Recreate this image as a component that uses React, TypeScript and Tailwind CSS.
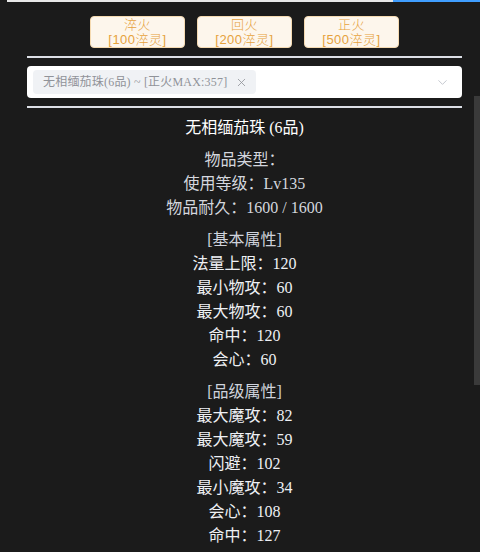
import { ChevronDown, X } from "lucide-react";

const serif = "font-['Liberation_Serif','Noto_Sans_CJK_SC',serif]";

const buttons = [
  { name: "淬火", cost: "[100淬灵]" },
  { name: "回火", cost: "[200淬灵]" },
  { name: "正火", cost: "[500淬灵]" },
];

const groups: { head?: string; rows: string[] }[] = [
  { rows: ["物品类型：", "使用等级：Lv135", "物品耐久：1600 / 1600"] },
  { head: "[基本属性]", rows: ["法量上限：120", "最小物攻：60", "最大物攻：60", "命中：120", "会心：60"] },
  { head: "[品级属性]", rows: ["最大魔攻：82", "最大魔攻：59", "闪避：102", "最小魔攻：34", "会心：108", "命中：127"] },
];

export default function App() {
  return (
    <div className="relative w-[480px] h-[552px] overflow-hidden bg-[#1b1b1b]">
      {/* top strip */}
      <div className="flex h-[2px]">
        <div className="w-[7px]" />
        <div className="w-[386px] bg-[#e8e8e8]" />
        <div className="flex-1 bg-[#409eff]" />
      </div>

      <div className="pl-[27px] pr-[18px]">
        {/* action buttons */}
        <div className="mt-[14px] flex justify-center gap-3">
          {buttons.map((b) => (
            <button
              key={b.name}
              className="w-[95px] h-[32px] flex flex-col items-center justify-center rounded-[4px] border border-[#f5dab1] bg-[#fdf6ec] text-[#e6a23c] text-[13px] leading-[15px] font-['Liberation_Sans','Noto_Sans_CJK_SC',sans-serif] font-light tracking-[0.5px]"
            >
              <span>{b.name}</span>
              <span>{b.cost}</span>
            </button>
          ))}
        </div>

        <div className="mt-[8px] h-[2px] bg-[#dcdfe6]" />

        {/* select */}
        <div className="mt-[8px] h-[32px] flex items-center rounded-[4px] bg-white pl-[6px] pr-[12px]">
          <div className={`h-[24px] flex items-center gap-[8px] rounded-[4px] bg-[#f0f2f5] pl-[10px] pr-[8px] text-[12px] text-[#909399] tracking-[0.2px] ${serif}`}>
            <span>无相缅茄珠(6品) ~ [正火MAX:357]</span>
            <X size={13} strokeWidth={1.5} />
          </div>
          <div className="flex-1" />
          <ChevronDown size={15} strokeWidth={1.5} className="text-[#c0c4cc]" />
        </div>

        <div className="mt-[8px] h-[2px] bg-[#dcdfe6]" />

        {/* item detail */}
        <div className={`pt-[8px] flex flex-col items-center text-[16px] leading-[24px] ${serif}`}>
          <div className="text-white">无相缅茄珠 (6品)</div>
          {groups.map((g, i) => (
            <div key={i} className="mt-[8px] flex flex-col items-center">
              {g.head && <div className="text-[#cfd3dc]">{g.head}</div>}
              {g.rows.map((r, j) => (
                <div key={j} className={i === 0 ? "text-[#d4d7de]" : "text-[#eef0f4]"}>
                  {r}
                </div>
              ))}
            </div>
          ))}
        </div>
      </div>

      {/* scrollbar thumb */}
      <div className="absolute left-[474px] top-[96px] w-[6px] h-[289px] bg-[#3a3a3a]" />
    </div>
  );
}
